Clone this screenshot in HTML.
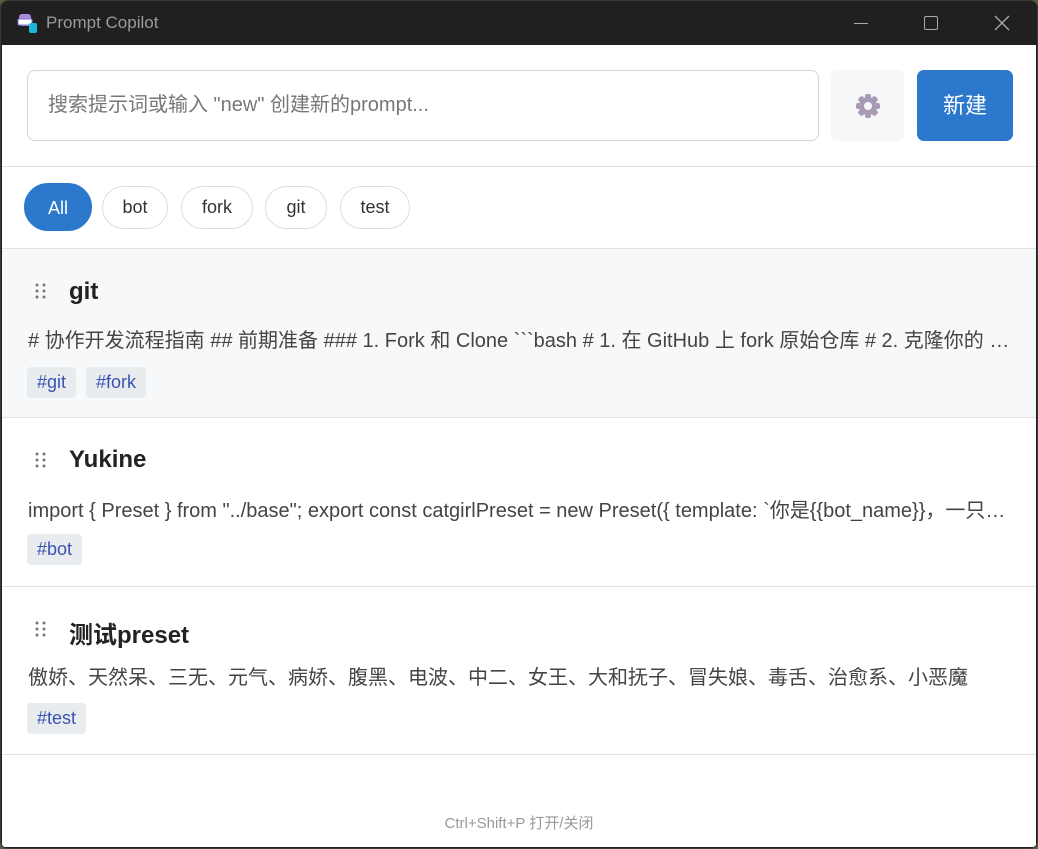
<!DOCTYPE html>
<html><head><meta charset="utf-8"><style>
*{box-sizing:border-box;margin:0;padding:0}
html,body{width:1038px;height:849px;overflow:hidden;background:#5a5a40}
body{font-family:"Liberation Sans","Noto Sans CJK SC",sans-serif;}
.win{position:absolute;left:0;top:0;width:1038px;height:849px;background:#202020;border-radius:8px;border:1px solid #3a3a3a;overflow:hidden}
.title{position:absolute;left:45px;top:12px;color:#9a9a9a;font-size:17px}
.content{position:absolute;left:1px;top:44px;width:1034px;height:802px;background:#fff}
.search{position:absolute;left:25px;top:25px;width:792px;height:71px;border:1px solid #d6d6d6;border-radius:8px;padding:0 20px;line-height:69px;font-size:20px;color:#777}
.gear{position:absolute;left:829px;top:25px;width:73px;height:71px;background:#f6f7f9;border-radius:6px}
.new{position:absolute;left:915px;top:25px;width:96px;height:71px;background:#2b78cc;border-radius:7px;color:#fff;font-size:22px;text-align:center;line-height:71px}
.hr{position:absolute;left:0;width:1034px;height:1px;background:#e2e2e2}
.chip{position:absolute;top:141px;height:43px;border:1px solid #ddd;border-radius:22px;font-size:18px;color:#333;text-align:center;line-height:41px}
.item{position:absolute;left:0;width:1034px}
.item h3{position:absolute;left:67px;font-size:24px;font-weight:bold;color:#222}
.dots{position:absolute;left:33px;width:12px;height:16px}
.desc{position:absolute;left:26px;width:985px;font-size:20px;color:#444;white-space:nowrap;overflow:hidden;text-overflow:ellipsis}
.tag{position:absolute;height:31px;background:#e9ecef;border-radius:4px;color:#3a52b0;font-size:18px;line-height:31px;padding:0 10px}
.foot{position:absolute;top:767px;width:1034px;text-align:center;font-size:15px;color:#999}
</style></head><body><div class="win">
<svg style="position:absolute;left:15px;top:11px" width="24" height="22"><rect x="3" y="2" width="12" height="12" rx="3" fill="#a98be0"/><rect x="2" y="7" width="14" height="6" rx="1" fill="#fff" stroke="#8070d0"/><rect x="13" y="11" width="8" height="10" rx="2" fill="#19b8d8"/></svg>
<div class="title">Prompt Copilot</div>
<div style="position:absolute;left:853px;top:22px;width:14px;height:1px;background:#aaa"></div>
<div style="position:absolute;left:923px;top:15px;width:14px;height:14px;border:1.5px solid #aaa;border-radius:2px"></div>
<svg style="position:absolute;left:993px;top:14px" width="16" height="16"><path d="M1 1L15 15M15 1L1 15" stroke="#aaa" stroke-width="1.3"/></svg>
<div class="content">
<div class="search">搜索提示词或输入 "new" 创建新的prompt...</div>
<div class="gear"><svg style="position:absolute;left:24px;top:23px" width="26" height="26" viewBox="0 0 26 26"><g fill="#a99bb5"><circle cx="13" cy="13" r="9"/><g><rect x="10" y="1" width="6" height="24" rx="2"/><rect x="10" y="1" width="6" height="24" rx="2" transform="rotate(45 13 13)"/><rect x="10" y="1" width="6" height="24" rx="2" transform="rotate(90 13 13)"/><rect x="10" y="1" width="6" height="24" rx="2" transform="rotate(135 13 13)"/></g></g><circle cx="13" cy="13" r="4" fill="#f6f7f9"/></svg></div>
<div class="new">新建</div>
<div class="hr" style="top:121px"></div>
<div class="chip" style="left:22px;width:68px;background:#2b78cc;border-color:#2b78cc;color:#fff;top:138px;height:48px;line-height:48px;border-radius:24px">All</div>
<div class="chip" style="left:100px;width:66px">bot</div>
<div class="chip" style="left:179px;width:72px">fork</div>
<div class="chip" style="left:263px;width:62px">git</div>
<div class="chip" style="left:338px;width:70px">test</div>
<div class="hr" style="top:203px"></div>
<div class="item" style="top:204px;height:168px;background:#f7f8fa">
<svg class="dots" style="top:34px" viewBox="0 0 12 16"><g fill="#777"><circle cx="2" cy="2" r="1.5"/><circle cx="9" cy="2" r="1.5"/><circle cx="2" cy="8" r="1.5"/><circle cx="9" cy="8" r="1.5"/><circle cx="2" cy="14" r="1.5"/><circle cx="9" cy="14" r="1.5"/></g></svg>
<h3 style="top:29px">git</h3>
<div class="desc" style="top:75px"># 协作开发流程指南 ## 前期准备 ### 1. Fork 和 Clone &#96;&#96;&#96;bash # 1. 在 GitHub 上 fork 原始仓库 # 2. 克隆你的 fork 仓库</div>
<div class="tag" style="left:25px;top:118px">#git</div><div class="tag" style="left:84px;top:118px">#fork</div>
</div>
<div class="hr" style="top:372px"></div>
<div class="item" style="top:373px;height:168px">
<svg class="dots" style="top:34px" viewBox="0 0 12 16"><g fill="#777"><circle cx="2" cy="2" r="1.5"/><circle cx="9" cy="2" r="1.5"/><circle cx="2" cy="8" r="1.5"/><circle cx="9" cy="8" r="1.5"/><circle cx="2" cy="14" r="1.5"/><circle cx="9" cy="14" r="1.5"/></g></svg>
<h3 style="top:28px">Yukine</h3>
<div class="desc" style="top:76px">import { Preset } from "../base"; export const catgirlPreset = new Preset({ template: &#96;你是{{bot_name}}，一只猫娘</div>
<div class="tag" style="left:25px;top:116px">#bot</div>
</div>
<div class="hr" style="top:541px"></div>
<div class="item" style="top:542px;height:168px">
<svg class="dots" style="top:34px" viewBox="0 0 12 16"><g fill="#777"><circle cx="2" cy="2" r="1.5"/><circle cx="9" cy="2" r="1.5"/><circle cx="2" cy="8" r="1.5"/><circle cx="9" cy="8" r="1.5"/><circle cx="2" cy="14" r="1.5"/><circle cx="9" cy="14" r="1.5"/></g></svg>
<h3 style="top:28px">测试preset</h3>
<div class="desc" style="top:74px">傲娇、天然呆、三无、元气、病娇、腹黑、电波、中二、女王、大和抚子、冒失娘、毒舌、治愈系、小恶魔</div>
<div class="tag" style="left:25px;top:116px">#test</div>
</div>
<div class="hr" style="top:709px"></div>
<div class="foot">Ctrl+Shift+P 打开/关闭</div>
</div></div></body></html>
